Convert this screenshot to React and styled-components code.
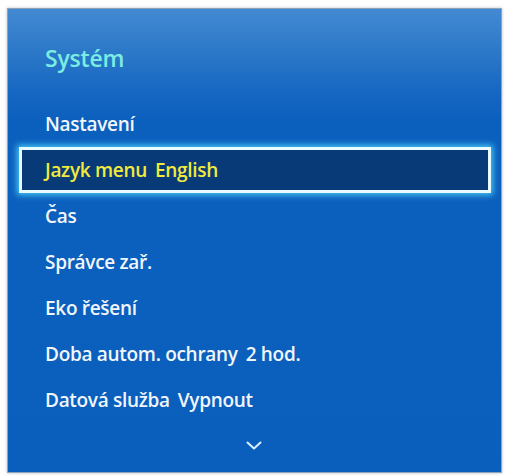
import React from "react";
import styled, { createGlobalStyle } from "styled-components";

const GlobalStyle = createGlobalStyle`
  html, body {
    margin: 0;
    padding: 0;
    background: #ffffff;
  }
`;

const Page = styled.div`
  width: 507px;
  height: 476px;
  padding: 8px 5px 3px 7px;
  box-sizing: border-box;
`;

const Panel = styled.div`
  width: 495px;
  height: 465px;
  box-sizing: border-box;
  border: 1px solid #8fa3b8;
  box-shadow: 0 0 3px rgba(60, 80, 110, 0.35);
  background: linear-gradient(
    to bottom,
    #4389d2 0%,
    #2a77c8 10%,
    #1667c2 18%,
    #0c60bd 24%,
    #0a5fbd 100%
  );
  font-family: "Open Sans", "Noto Sans", sans-serif;
  display: flex;
  flex-direction: column;
`;

const Header = styled.div`
  height: 92px;
  display: flex;
  align-items: center;
  padding: 6px 0 0 37px;
  box-sizing: border-box;
`;

const Title = styled.h1`
  margin: 0;
  font-size: 23px;
  font-weight: 600;
  color: #7cece2;
  letter-spacing: -0.2px;
`;

const List = styled.div`
  display: flex;
  flex-direction: column;
`;

const Row = styled.div`
  height: 46px;
  display: flex;
  align-items: center;
  box-sizing: border-box;
  font-size: 19px;
  font-weight: 600;
  letter-spacing: -0.3px;
  color: ${(p) => (p.$active ? "#f2ea3c" : "#f1f6fb")};
  padding-left: ${(p) => (p.$active ? "23px" : "37px")};
  margin: ${(p) => (p.$active ? "0 10px 0 11px" : "0")};
  border: ${(p) => (p.$active ? "3px solid #e9fbff" : "none")};
  background: ${(p) => (p.$active ? "#083a78" : "transparent")};
  box-shadow: ${(p) =>
    p.$active ? "0 0 6px 2px rgba(80, 220, 255, 0.85)" : "none"};
`;

const Value = styled.span`
  margin-left: 8px;
`;

const More = styled.div`
  flex: 1;
  display: flex;
  align-items: flex-start;
  justify-content: center;
  padding-top: 18px;
  padding-right: 2px;
`;

const items = [
  { label: "Nastavení" },
  { label: "Jazyk menu", value: "English", active: true },
  { label: "Čas" },
  { label: "Správce zař." },
  { label: "Eko řešení" },
  { label: "Doba autom. ochrany", value: "2 hod." },
  { label: "Datová služba", value: "Vypnout" },
];

export default function App() {
  return (
    <Page>
      <GlobalStyle />
      <Panel>
        <Header>
          <Title>Systém</Title>
        </Header>
        <List>
          {items.map((item) => (
            <Row key={item.label} $active={item.active}>
              {item.label}
              {item.value && <Value>{item.value}</Value>}
            </Row>
          ))}
        </List>
        <More>
          <svg width="16" height="9" viewBox="0 0 16 9">
            <path
              d="M1.5 1.5 L8 7.5 L14.5 1.5"
              fill="none"
              stroke="#dbeeff"
              strokeWidth="2"
              strokeLinecap="round"
              strokeLinejoin="round"
            />
          </svg>
        </More>
      </Panel>
    </Page>
  );
}
